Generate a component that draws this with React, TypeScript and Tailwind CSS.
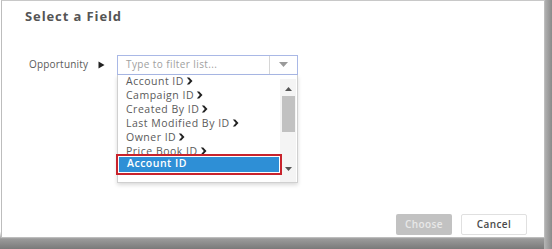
import React from "react";

const items = ["Account ID", "Campaign ID", "Created By ID", "Last Modified By ID", "Owner ID", "Price Book ID"];

function Chevron() {
  return (
    <svg width="7" height="8" viewBox="0 0 7 8" className="inline-block ml-[2px]">
      <path d="M0.8 0.5 L3.2 0.5 L6.5 4 L3.2 7.5 L0.8 7.5 L3.8 4 Z" fill="#222" />
    </svg>
  );
}

export default function App() {
  return (
    <div
      className="w-[552px] h-[249px] overflow-hidden relative"
      style={{ fontFamily: '"Open Sans", "Liberation Sans", sans-serif' }}
    >
      <div className="absolute inset-0 bg-[linear-gradient(to_bottom,#ffffff_0%,#ffffff_93%,#9a9a9a_96%,#7a7a7a_100%)]" />
      <div className="absolute right-0 top-0 bottom-0 w-[8px] bg-[linear-gradient(to_right,#b5b5b5,#8a8a8a)]" />
      <div className="relative ml-[1px] mt-0 w-[544px] h-[238px] bg-white border border-[#bdbdbd] border-t-[#c8c8c8]">
        <div className="pl-[23px] pt-[6px] text-[13px] font-bold text-[#555] tracking-[0.9px]">Select a Field</div>
        <div className="flex items-start mt-[28px]">
          <div className="w-[115px] flex items-center h-[20px] pl-[27px] text-[10px] text-[#5a5a5a] tracking-[0.2px]">
            <span>Opportunity</span>
            <svg width="7" height="8" viewBox="0 0 7 8" className="ml-[10px]">
              <path d="M0.5 0.5 L6.5 4 L0.5 7.5 Z" fill="#222" />
            </svg>
          </div>
          <div className="relative w-[181px]">
            <div className="h-[20px] flex border border-[#a9b8e6] bg-white">
              <div className="flex-1 flex items-center pl-[8px] text-[10px] text-[#a0a0a0] tracking-[0.4px]">Type to filter list...</div>
              <div className="w-[28px] border-l border-[#d6d6d6] flex items-center justify-center">
                <svg width="9" height="5" viewBox="0 0 9 5">
                  <path d="M0 0 L9 0 L4.5 5 Z" fill="#9a9a9a" />
                </svg>
              </div>
            </div>
            <div className="absolute left-0 top-[20px] w-[181px] h-[108px] bg-white border-l border-r border-b border-[#d0d0d0] shadow-[0_2px_4px_rgba(0,0,0,0.15)] overflow-visible">
              <div className="relative h-full overflow-hidden">
                <div className="-mt-[1px] pl-[8px] text-[10.5px] leading-[14px] text-[#5a5a5a] tracking-[0.5px]">
                  {items.map((t) => (
                    <div key={t} className="h-[14px] flex items-center whitespace-nowrap">
                      {t}
                      <Chevron />
                    </div>
                  ))}
                </div>
                <div className="absolute right-[1px] top-[4px] bottom-0 w-[16px] bg-[#f4f4f4] flex flex-col items-center">
                  <svg width="7" height="4" viewBox="0 0 7 4" className="mt-[8px]">
                    <path d="M0 4 L7 4 L3.5 0 Z" fill="#555" />
                  </svg>
                  <div className="mt-[5px] w-[13px] h-[36px] bg-[#c1c1c1]" />
                  <div className="flex-1" />
                  <svg width="7" height="4" viewBox="0 0 7 4" className="mb-[11px]">
                    <path d="M0 0 L7 0 L3.5 4 Z" fill="#555" />
                  </svg>
                </div>
              </div>
              <div className="absolute left-[-2px] top-[79px] w-[166px] h-[21px] border-2 border-[#c8232c] p-[1px]">
                <div className="h-full bg-[#2e8fd6] text-white text-[10.5px] font-semibold tracking-[0.5px] flex items-center pl-[8px]">Account ID</div>
              </div>
            </div>
          </div>
        </div>
        <div className="absolute right-[17px] bottom-[2px] flex gap-[9px]">
          <button className="w-[56px] h-[21px] rounded-[2px] bg-[#c2c2c2] text-[#e8e8e8] text-[10px] font-semibold tracking-[0.4px]">Choose</button>
          <button className="w-[66px] h-[21px] rounded-[2px] bg-white border border-[#e0e0e0] text-[#4a4a4a] text-[10px] font-semibold tracking-[0.4px]">Cancel</button>
        </div>
      </div>
    </div>
  );
}
